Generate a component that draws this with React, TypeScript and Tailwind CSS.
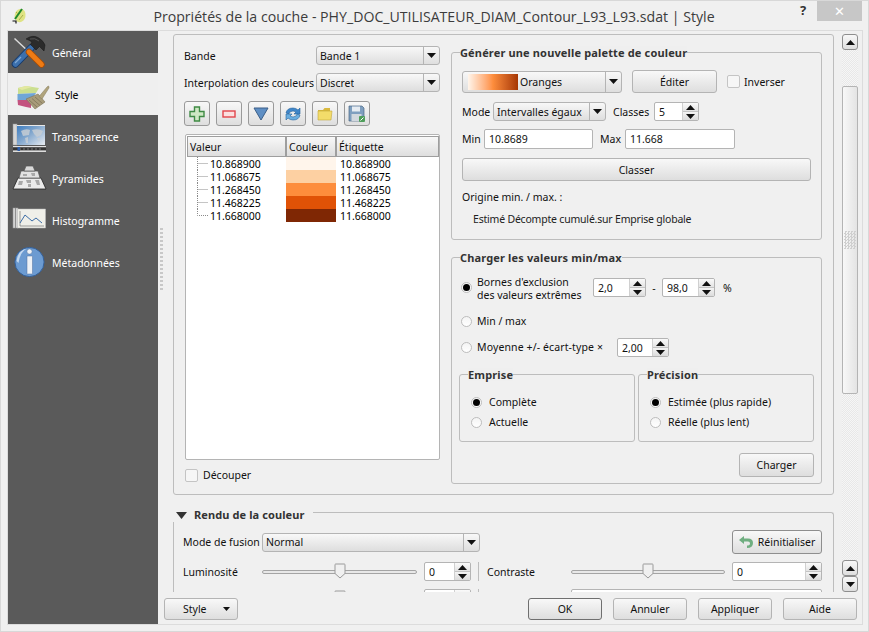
import React from "react";

const btn = "bg-gradient-to-b from-[#f8f8f8] to-[#dedede] border border-[#b4b4b4] rounded-[3px] flex items-center justify-center text-[#111]";
const field = "bg-white border border-[#b4b4b4] rounded-[2px]";

function Tri({ up = false, w = 9, h = 5 }: { up?: boolean; w?: number; h?: number }) {
  return (
    <svg width={w} height={h} viewBox="0 0 9 5" className="block shrink-0">
      <path d={up ? "M4.5 0 L9 5 L0 5 Z" : "M0 0 L9 0 L4.5 5 Z"} fill="#111" />
    </svg>
  );
}

function Combo({ w, h = 19, text, className = "" }: { w: number; h?: number; text: string; className?: string }) {
  return (
    <div className={`${btn} !justify-between shrink-0 ${className}`} style={{ width: w, height: h }}>
      <span className="pl-[3px] truncate">{text}</span>
      <span className="w-[16px] h-full border-l border-[#b4b4b4] flex items-center justify-center shrink-0">
        <Tri />
      </span>
    </div>
  );
}

function Spin({ w, value, h = 19 }: { w: number; value: string; h?: number }) {
  return (
    <div className={`${field} flex shrink-0 overflow-hidden`} style={{ width: w, height: h }}>
      <span className="flex-1 pl-[4px] flex items-center">{value}</span>
      <span className="w-[16px] h-full flex flex-col border-l border-[#d0d0d0] shrink-0">
        <span className="flex-1 flex items-center justify-center bg-gradient-to-b from-[#fafafa] to-[#e4e4e4] border-b border-[#c4c4c4]"><Tri up /></span>
        <span className="flex-1 flex items-center justify-center bg-gradient-to-b from-[#f4f4f4] to-[#dcdcdc]"><Tri /></span>
      </span>
    </div>
  );
}

function Radio({ on = false }: { on?: boolean }) {
  return (
    <span className="w-[11px] h-[11px] rounded-full border border-[#bdbdbd] bg-gradient-to-b from-[#f4f4f4] to-[#ffffff] flex items-center justify-center shrink-0">
      {on && <span className="w-[7px] h-[7px] rounded-full bg-black block" />}
    </span>
  );
}

function Check() {
  return <span className="w-[13px] h-[13px] border border-[#c4c4c4] rounded-[2px] bg-[#f6f6f6] block shrink-0" />;
}

function Title({ children, x }: { children: React.ReactNode; x: number }) {
  return (
    <div className="absolute -top-[7px] bg-[#efefef] font-bold text-[11px] tracking-[0.15px] text-[#333] leading-[13px] whitespace-nowrap" style={{ left: x }}>
      {children}
    </div>
  );
}

function Slider({ w, pos }: { w: number; pos: number }) {
  return (
    <div className="relative h-[19px] flex items-center shrink-0" style={{ width: w }}>
      <div className="w-full h-[4px] border border-[#a4a4a4] rounded-[2px] bg-[#e8e8e8]" />
      <svg width="12" height="16" viewBox="0 0 12 16" className="absolute top-[1px]" style={{ left: pos }}>
        <path d="M1.5 1 H10.5 Q11 1 11 2 V10.5 L6 15 L1 10.5 V2 Q1 1 1.5 1 Z" fill="#f0f0f0" stroke="#9a9a9a" />
      </svg>
    </div>
  );
}

function ToolIcon() {
  return (
    <svg width="44" height="42" viewBox="0 0 44 42">
      <path d="M6.5 7.5 L21 21" stroke="#dcdcdc" strokeWidth="1.4" />
      <path d="M7.5 33 L23 17" stroke="#173a6b" strokeWidth="7.5" strokeLinecap="round" />
      <path d="M7.5 33 L23 17" stroke="#3c70ad" strokeWidth="5.5" strokeLinecap="round" />
      <path d="M7 32 L13 26" stroke="#7fa8d4" strokeWidth="1.2" />
      <path d="M21 21 L33.5 33.5" stroke="#a84c06" strokeWidth="6.5" strokeLinecap="round" />
      <path d="M21 21 L33.5 33.5" stroke="#ee7b14" strokeWidth="4.8" strokeLinecap="round" />
      <path d="M18 8 Q24 3.5 30 6.5 Q35 9 37 14 L36 20 L31.5 15.5 L28 19 L22.5 13.5 L24 11 Q21 9 18 8 Z" fill="#2b2b2b" stroke="#151515" strokeWidth="0.5" />
      <path d="M22 8 Q27 6.5 31 10" stroke="#555" strokeWidth="1" fill="none" />
    </svg>
  );
}

function StyleIcon() {
  return (
    <svg width="44" height="42" viewBox="0 0 44 42">
      <path d="M10 15 L18 13 L31 15 L28 20 L10 21 Z" fill="#c6dd84" opacity="0.9" />
      <path d="M10 15 L18 13 L24 14 L14 17 Z" fill="#e3e8a0" />
      <path d="M9.5 21 L28 20 L23 27 L9.5 27 Z" fill="#6fa6d8" />
      <path d="M9.5 27 L23 27 L23 35 L18 34 L10 32 Z" fill="#c3527f" />
      <path d="M18 26 L30 21 L37 29 L27 36 Z" fill="#a89c7a" stroke="#7d7458" strokeWidth="0.6" />
      <path d="M21 27 L29 34 M24 25.5 L32 32.5 M27 24 L34.5 30.5" stroke="#7d7458" strokeWidth="0.8" />
      <path d="M31 23.5 L39 14 Q40.5 12.5 41 13.5 Q41.5 15 40 16.5 L34 26 Z" fill="#b0a47c" stroke="#857b5c" strokeWidth="0.5" />
    </svg>
  );
}

function MapIcon() {
  return (
    <svg width="44" height="42" viewBox="0 0 44 42">
      <defs>
        <linearGradient id="mapg" x1="0" y1="0" x2="1" y2="0.9">
          <stop offset="0" stopColor="#3b7cc0" />
          <stop offset="0.45" stopColor="#7ea4cc" />
          <stop offset="1" stopColor="#dfe6ee" />
        </linearGradient>
      </defs>
      <rect x="5" y="9" width="4" height="21" fill="#d6d6d6" stroke="#999" strokeWidth="0.5" />
      <rect x="9" y="10" width="28" height="20" fill="url(#mapg)" />
      <rect x="9" y="10" width="28" height="1" fill="#e8e8e8" />
      <path d="M13 16 Q18 13 22 15 L21 20 L15 21 Z M24 15 Q30 13 35 16 L33 20 L29 22 L26 19 Z M17 23 L20 22 L20 28 L18 28 Z M29 23 L32 23 L31 27 Z" fill="#c5ccd3" opacity="0.85" />
      <rect x="5" y="31" width="33" height="1" fill="#e2e2e2" />
      <rect x="5" y="33" width="33" height="2" fill="#343434" />
      <path d="M12 33 V35 M16 33 V35 M20 33 V35 M24 33 V35 M28 33 V35 M32 33 V35" stroke="#888" strokeWidth="0.8" />
      <rect x="5" y="35.5" width="33" height="1.5" fill="#dddddd" />
      <rect x="9.5" y="32" width="2.5" height="4" fill="#2c5ca8" />
    </svg>
  );
}

function PyramidIcon() {
  return (
    <svg width="44" height="42" viewBox="0 0 44 42">
      <path d="M5 32 L10 21 L33 21 L38 32 Z" fill="#ebebeb" stroke="#222" strokeWidth="0.8" />
      <path d="M11 21 L13 14 L30 14 L32 21 Z" fill="#e2e2e2" stroke="#555" strokeWidth="0.7" />
      <path d="M16 14 L18 9 L25 9 L27 14 Z" fill="#d9d9d9" stroke="#555" strokeWidth="0.7" />
      <path d="M11 24 h4 l-1 4 h-4 Z M18 23 h5 v3 h-4 Z M27 23 h4 l1 5 h-3 Z M15 17 h4 v2 h-4 Z M23 16 h4 v3 h-3 Z M20 27 h3 v3 h-3 Z" fill="#a9a9a9" />
    </svg>
  );
}

function HistIcon() {
  return (
    <svg width="44" height="42" viewBox="0 0 44 42">
      <rect x="5" y="9" width="5" height="20" fill="#d2d2d2" stroke="#9a9a9a" strokeWidth="0.5" />
      <rect x="7" y="9" width="1" height="20" fill="#8f8f8f" />
      <rect x="9.5" y="10" width="28" height="19" fill="#efefe9" stroke="#bdbdbd" strokeWidth="0.5" />
      <path d="M12 12 V27 H36" fill="none" stroke="#777" strokeWidth="0.7" />
      <path d="M12 24 L17 16 L24 22 L28 19 L34 24" fill="none" stroke="#3d6da6" strokeWidth="1" />
    </svg>
  );
}

function InfoIcon() {
  return (
    <svg width="44" height="42" viewBox="0 0 44 42">
      <circle cx="21.5" cy="21" r="14.6" fill="#6c9bd1" stroke="#33609a" strokeWidth="1" />
      <path d="M8.5 20 Q10 9 19 7.5 Q12 11 10.5 22 Z" fill="#c3d8ef" />
      <circle cx="21.5" cy="10.5" r="2.6" fill="#eef2f6" stroke="#4c6f9c" strokeWidth="0.5" />
      <rect x="19" y="15" width="5.5" height="18" rx="0.5" fill="#eef2f6" stroke="#4c6f9c" strokeWidth="0.5" />
    </svg>
  );
}

function QgisIcon() {
  return (
    <svg width="16" height="18" viewBox="0 0 16 18">
      <path d="M2.5 9 Q3 3 8 2 Q13 2 13.5 7 Q14 13 9 15 Q3 16 2.5 9 Z" fill="#dfe384" />
      <path d="M10 2 L3 12" stroke="#1f8a2c" strokeWidth="2" fill="none" />
      <path d="M7 13 L11 8 M4 5 L6 7" stroke="#a9b04a" strokeWidth="1" fill="none" />
      <path d="M0.5 14 H4 V16.5" stroke="#111" strokeWidth="1.2" fill="none" />
    </svg>
  );
}

function SideItem({ icon, label, active = false, shift = 52 }: { icon: React.ReactNode; label: string; active?: boolean; shift?: number }) {
  return (
    <div className={`h-[42px] flex items-center ${active ? "bg-[#efefef] text-black" : "text-white"}`}>
      <span className="w-[44px] h-[42px] shrink-0 block">{icon}</span>
      <span className="pt-[2px]" style={{ marginLeft: shift - 52 }}>{label}</span>
    </div>
  );
}

function ToolBtn({ children }: { children: React.ReactNode }) {
  return <div className={`${btn} !border-[#9a9a9a] w-[26px] h-[25px]`}>{children}</div>;
}

const rows = [
  ["10.868900", "#fff5eb"],
  ["11.068675", "#fdd0a2"],
  ["11.268450", "#fd8d3c"],
  ["11.468225", "#e05206"],
  ["11.668000", "#7f2704"],
];

function Head({ w, label }: { w: number; label: string }) {
  return (
    <div className="h-[21px] bg-gradient-to-b from-[#f8f8f8] to-[#dedede] border border-[#9e9e9e] flex items-center pl-[2px] shrink-0" style={{ width: w }}>
      {label}
    </div>
  );
}

function Tree() {
  return (
    <div className={`${field} w-[255px] h-[326px] ml-[1px] p-[1px] overflow-hidden`}>
      <div className="flex">
        <Head w={99} label="Valeur" />
        <Head w={50} label="Couleur" />
        <Head w={103} label="Étiquette" />
      </div>
      <div>
        {rows.map(([v, c], i) => (
          <div key={v} className="flex h-[13px] items-center">
            <div className="w-[99px] flex items-center shrink-0">
              <svg width="23" height="13" viewBox="0 0 23 13" className="shrink-0">
                <path d={i === 4 ? "M10.5 0 V6.5 H21" : "M10.5 0 V13 M10.5 6.5 H21"} fill="none" stroke="#8a8a8a" strokeDasharray="1 1" />
              </svg>
              <span className="text-black">{v}</span>
            </div>
            <div className="w-[50px] h-full shrink-0" style={{ backgroundColor: c }} />
            <div className="pl-[4px] text-black">{v}</div>
          </div>
        ))}
      </div>
    </div>
  );
}

function LeftColumn() {
  return (
    <div className="w-[256px] shrink-0 pt-[11px]">
      <div className="flex items-center h-[19px]">
        <span className="w-[132px]">Bande</span>
        <Combo w={124} text="Bande 1" />
      </div>
      <div className="flex items-center h-[19px] mt-[8px]">
        <span className="w-[132px] whitespace-nowrap">Interpolation des couleurs</span>
        <Combo w={124} text="Discret" />
      </div>
      <div className="flex gap-[6px] mt-[9px]">
        <ToolBtn>
          <svg width="16" height="16" viewBox="0 0 16 16"><path d="M5.5 1 H10.5 V5.5 H15 V10.5 H10.5 V15 H5.5 V10.5 H1 V5.5 H5.5 Z" fill="#cfe8c4" stroke="#3f8a44" strokeWidth="1.4" /></svg>
        </ToolBtn>
        <ToolBtn>
          <svg width="14" height="8" viewBox="0 0 14 8"><rect x="1" y="1" width="12" height="6" fill="#fbe0e0" stroke="#e2454b" strokeWidth="1.4" /></svg>
        </ToolBtn>
        <ToolBtn>
          <svg width="16" height="14" viewBox="0 0 16 14"><path d="M1 1 H15 L8 13 Z" fill="#5f8fc4" stroke="#3c5f88" strokeWidth="1" /></svg>
        </ToolBtn>
        <ToolBtn>
          <svg width="18" height="16" viewBox="0 0 18 16">
            <path d="M2 7 Q3 2 9 2 Q12 2 14 4 L16 2 V8 H10 L12 6 Q9 4 6 6 Q5 7 5 8 Z" fill="#3f86c9" stroke="#27639c" strokeWidth="0.6" />
            <path d="M16 9 Q15 14 9 14 Q6 14 4 12 L2 14 V8 H8 L6 10 Q9 12 12 10 Q13 9 13 8 Z" fill="#6aaee0" stroke="#27639c" strokeWidth="0.6" />
          </svg>
        </ToolBtn>
        <ToolBtn>
          <svg width="16" height="14" viewBox="0 0 16 14"><path d="M1 3 H6 L7.5 1 H13 V4 H1 Z" fill="#d9b93e" /><path d="M1 4 H15 L14 13 H1 Z" fill="#f3dc6a" stroke="#c4a73a" strokeWidth="0.6" /></svg>
        </ToolBtn>
        <ToolBtn>
          <svg width="18" height="18" viewBox="0 0 18 18">
            <path d="M1 1 H14 L16 3 V16 H1 Z" fill="#7f9fbf" stroke="#4b6785" strokeWidth="0.7" />
            <rect x="4" y="1.5" width="8" height="5" fill="#e6ecf2" />
            <rect x="3.5" y="9" width="10" height="7" fill="#d2d8de" />
            <rect x="11" y="11" width="6" height="6" rx="1" fill="#4f9e5b" />
            <path d="M12.5 15.5 L15.5 12.5" stroke="#fff" strokeWidth="1" />
          </svg>
        </ToolBtn>
      </div>
      <div className="mt-[8px]"><Tree /></div>
      <div className="flex items-center mt-[8px] ml-[1px] h-[14px] gap-[5px]">
        <Check />
        <span>Découper</span>
      </div>
    </div>
  );
}

function PaletteGroup() {
  return (
    <div className="relative h-[188px] border border-[#bdbdbd] rounded-[3px] pl-[10px] pr-[10px] pt-[17px]">
      <Title x={8}>Générer une nouvelle palette de couleur</Title>
      <div className="flex items-center h-[23px]">
        <div className={`${btn} !justify-between w-[160px] h-[22px]`}>
          <span className="flex items-center pl-[5px]">
            <span className="w-[50px] h-[16px] bg-gradient-to-r from-[#fff5eb] via-[#fd8d3c] to-[#a63603] block" />
            <span className="pl-[2px]">Oranges</span>
          </span>
          <span className="w-[16px] h-full border-l border-[#b4b4b4] flex items-center justify-center"><Tri /></span>
        </div>
        <div className={`${btn} w-[85px] h-[23px] ml-[10px]`}>Éditer</div>
        <span className="ml-[10px]"><Check /></span>
        <span className="ml-[4px]">Inverser</span>
      </div>
      <div className="flex items-center h-[19px] mt-[9px]">
        <span className="w-[31px]">Mode</span>
        <Combo w={113} text="Intervalles égaux" />
        <span className="ml-[7px] w-[41px]">Classes</span>
        <Spin w={45} value="5" />
      </div>
      <div className="flex items-center h-[20px] mt-[8px]">
        <span className="w-[22px]">Min</span>
        <div className={`${field} w-[109px] h-[20px] pl-[4px] flex items-center`}>10.8689</div>
        <span className="ml-[7px] w-[25px]">Max</span>
        <div className={`${field} w-[110px] h-[20px] pl-[4px] flex items-center`}>11.668</div>
      </div>
      <div className={`${btn} w-[349px] h-[23px] mt-[9px]`}>Classer</div>
      <div className="mt-[9px] leading-[14px]">Origine min. / max. :</div>
      <div className="mt-[8px] ml-[11px] leading-[14px] text-[#222] tracking-[-0.2px]">Estimé Décompte cumulé.sur Emprise globale</div>
    </div>
  );
}

function SubGroup({ title, a, b }: { title: string; a: string; b: string }) {
  return (
    <div className="relative w-[176px] h-[68px] border border-[#bdbdbd] rounded-[3px] pl-[11px] pt-[20px]">
      <Title x={8}>{title}</Title>
      <div className="flex items-center h-[14px] gap-[7px]"><Radio on /><span>{a}</span></div>
      <div className="flex items-center h-[14px] gap-[7px] mt-[6px]"><Radio /><span>{b}</span></div>
    </div>
  );
}

function MinMaxGroup() {
  return (
    <div className="relative mt-[17px] h-[227px] border border-[#bdbdbd] rounded-[3px] pl-[9px] pt-[20px]">
      <Title x={8}>Charger les valeurs min/max</Title>
      <div className="flex items-center h-[19px]">
        <Radio on />
        <span className="ml-[5px] w-[116px] leading-[13px] pt-[2px]">Bornes d'exclusion<br />des valeurs extrêmes</span>
        <Spin w={53} value="2,0" />
        <span className="w-[16px] text-center">-</span>
        <Spin w={53} value="98,0" />
        <span className="ml-[8px]">%</span>
      </div>
      <div className="flex items-center h-[14px] mt-[17px]">
        <Radio />
        <span className="ml-[5px]">Min / max</span>
      </div>
      <div className="flex items-center h-[19px] mt-[10px]">
        <Radio />
        <span className="ml-[5px] w-[140px] tracking-[0.12px] pb-[1px]">Moyenne +/- écart-type ×</span>
        <Spin w={52} value="2,00" />
      </div>
      <div className="flex gap-[3px] mt-[17px] -ml-[2px]">
        <SubGroup title="Emprise" a="Complète" b="Actuelle" />
        <SubGroup title="Précision" a="Estimée (plus rapide)" b="Réelle (plus lent)" />
      </div>
      <div className="flex justify-end w-[353px] mt-[11px]">
        <div className={`${btn} w-[75px] h-[24px]`}>Charger</div>
      </div>
    </div>
  );
}

function SymbologyGroup() {
  return (
    <div className="w-[661px] h-[461px] border border-[#bdbdbd] rounded-[3px] flex pl-[10px] shrink-0">
      <LeftColumn />
      <div className="w-[371px] ml-[11px] pt-[17px] shrink-0">
        <PaletteGroup />
        <MinMaxGroup />
      </div>
    </div>
  );
}

function RenderGroup() {
  return (
    <div className="w-[661px] mt-[14px] shrink-0">
      <div className="flex items-end h-[13px]">
        <svg width="11" height="7" viewBox="0 0 11 7" className="ml-[3px] mb-[3px]"><path d="M0 0 H11 L5.5 7 Z" fill="#333" /></svg>
        <span className="ml-[7px] mb-[1px] w-[111px] font-bold text-[11px] tracking-[0.1px] text-[#333] leading-[13px] whitespace-nowrap">Rendu de la couleur</span>
        <div className="flex-1 ml-[8px] h-[10px] border-t border-r border-[#bdbdbd] rounded-tr-[3px]" />
      </div>
      <div className="border-l border-r border-[#bdbdbd] pl-[9px] h-[100px]">
        <div className="flex items-center pt-[8px]">
          <span className="w-[79px] whitespace-nowrap">Mode de fusion</span>
          <Combo w={218} text="Normal" />
          <div className={`${btn} !border-[#8e8e8e] w-[90px] h-[24px] ml-[252px] gap-[5px]`}>
            <svg width="14" height="12" viewBox="0 0 14 12"><path d="M5 0 L0 4 L5 8 V5.5 H9 Q11 5.5 11 7.5 Q11 9.5 8 9.5 V12 Q14 12 14 7 Q14 2.5 9 2.5 H5 Z" fill="#6fae80" /></svg>
            <span>Réinitialiser</span>
          </div>
        </div>
        <div className="flex items-center mt-[8px]">
          <span className="w-[79px]">Luminosité</span>
          <Slider w={155} pos={72} />
          <span className="ml-[7px]"><Spin w={47} value="0" /></span>
          <span className="w-px h-[19px] bg-[#bdbdbd] ml-[7px]" />
          <span className="ml-[8px] w-[84px]">Contraste</span>
          <Slider w={154} pos={71} />
          <span className="ml-[7px]"><Spin w={90} value="0" /></span>
        </div>
        <div className="flex items-center mt-[8px]">
          <span className="w-[79px]" />
          <Slider w={155} pos={72} />
          <span className="ml-[7px]"><Spin w={47} value="" /></span>
          <span className="w-px h-[19px] bg-[#bdbdbd] ml-[7px]" />
          <span className="ml-[8px] w-[84px]" />
          <span className={`${field} w-[251px] h-[19px]`} />
        </div>
      </div>
    </div>
  );
}

function ScrollBtn({ up }: { up: boolean }) {
  return (
    <div className={`${btn} !border-[#8e8e8e] w-[16px] h-[16px] shrink-0`}><Tri up={up} /></div>
  );
}

const dither = "bg-[repeating-conic-gradient(#e8e8e8_0%_25%,#f6f6f6_0%_50%)] bg-[length:2px_2px]";

function ScrollBar() {
  return (
    <div className="w-[16px] ml-[8px] pt-[3px] flex flex-col shrink-0 h-full">
      <ScrollBtn up />
      <div className={`h-[36px] ${dither}`} />
      <div className="h-[308px] border border-[#b4b4b4] rounded-[2px] bg-gradient-to-r from-[#f8f8f8] to-[#e4e4e4] flex items-center justify-center shrink-0">
        <div className="w-[12px] h-[18px] bg-[repeating-conic-gradient(#cfcfcf_0%_25%,transparent_0%_50%)] bg-[length:3px_3px]" />
      </div>
      <div className={`flex-1 ${dither}`} />
      <ScrollBtn up />
      <ScrollBtn up={false} />
    </div>
  );
}

function Footer() {
  const b = "w-[74px] h-[22px]";
  return (
    <div className="h-[31px] pt-[6px] pl-[6px] flex items-start">
      <div className={`${btn} w-[74px] h-[22px] !justify-start relative`}>
        <span className="ml-[18px]">Style</span>
        <span className="absolute right-[7px] top-[8px]"><Tri w={7} h={4} /></span>
      </div>
      <div className="ml-[290px] flex gap-[11px]">
        <div className={`${btn} ${b} !border-[#6f6f6f]`}>OK</div>
        <div className={`${btn} ${b}`}>Annuler</div>
        <div className={`${btn} ${b}`}>Appliquer</div>
        <div className={`${btn} ${b}`}>Aide</div>
      </div>
    </div>
  );
}

export default function App() {
  return (
    <div className="w-[869px] h-[632px] bg-[#f0f0f0] border border-[#d8d8d8] overflow-hidden flex flex-col text-[10.5px] leading-[14px] text-[#111] font-['Noto_Sans',_'DejaVu_Sans',_sans-serif]">
      <div className="h-[29px] shrink-0 flex items-start relative">
        <span className="ml-[11px] mt-[6px]"><QgisIcon /></span>
        <div className="absolute -left-[1px] w-[869px] top-[7px] text-center text-[14.15px] leading-[18px] text-[#3c3c3c] pr-[1px] font-['Open_Sans',_sans-serif]">
          Propriétés de la couche - PHY_DOC_UTILISATEUR_DIAM_Contour_L93_L93.sdat | Style
        </div>
        <span className="absolute left-[799px] top-[2px] font-bold text-[13px] text-[#333]">?</span>
        <div className="absolute left-[816px] -top-px w-[45px] h-[21px] bg-[#c7c7c7] flex items-center justify-center text-white text-[13px]">✕</div>
      </div>
      <div className="ml-[6px] mr-[5px] h-[595px] border border-[#dcdcdc] flex shrink-0">
        <div className="w-[150px] h-[593px] bg-[#5a5a5a] shrink-0 flex flex-col">
          <SideItem icon={<ToolIcon />} label="Général" />
          <SideItem icon={<StyleIcon />} label="Style" active shift={55} />
          <SideItem icon={<MapIcon />} label="Transparence" />
          <SideItem icon={<PyramidIcon />} label="Pyramides" />
          <SideItem icon={<HistIcon />} label="Histogramme" />
          <SideItem icon={<InfoIcon />} label="Métadonnées" />
        </div>
        <div className="flex-1 flex flex-col h-[593px] min-w-0">
          <div className="h-[561px] flex overflow-hidden shrink-0 pl-[1px]">
            <div className="w-[14px] shrink-0 flex items-start">
              <div className="mt-[197px] ml-[1px] w-[3px] h-[62px] bg-[repeating-linear-gradient(to_bottom,#c8c8c8_0,#c8c8c8_2px,transparent_2px,transparent_4px)]" />
            </div>
            <div className="w-[661px] pt-[3px] shrink-0 flex flex-col">
              <SymbologyGroup />
              <RenderGroup />
            </div>
            <ScrollBar />
          </div>
          <Footer />
        </div>
      </div>
    </div>
  );
}
